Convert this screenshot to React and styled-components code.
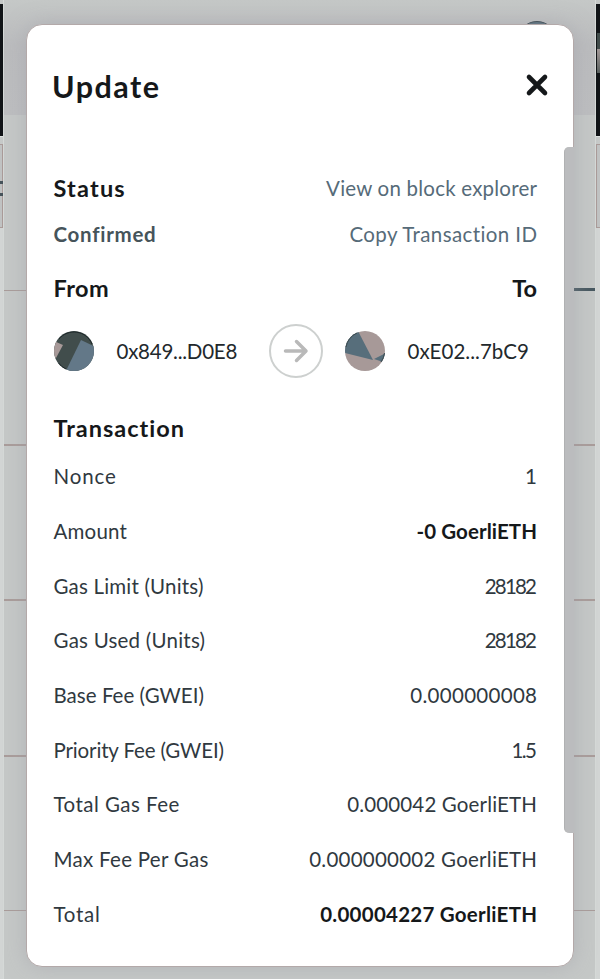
import React from 'react';
import styled, { createGlobalStyle } from 'styled-components';

const GlobalStyle = createGlobalStyle`
  * { box-sizing: border-box; }
  html, body { margin: 0; padding: 0; }
  body {
    font-family: Lato, "Liberation Sans", sans-serif;
    font-variant-ligatures: none;
    color: #15181a;
    overflow: hidden;
  }
`;

const Screen = styled.div`
  position: relative;
  width: 600px;
  height: 979px;
  overflow: hidden;
  background: #c5c8c7;
`;

const Backdrop = styled.div`
  display: grid;
  grid-template-columns: 3px 1fr 4px;
  height: 100%;
`;

const SideStrip = styled.div`
  display: flex;
  flex-direction: column;
  padding-top: 4px;
  background: linear-gradient(#c5c8c7 130px, #d2d5d4 230px);
  overflow: hidden;
`;

const DarkBlock = styled.div`
  height: 133px;
  flex: none;
  background: #111417;
  border-bottom: 1px solid #dfe3e1;
`;

const BoxEdge = styled.div`
  height: 84px;
  flex: none;
  margin-top: 7px;
  border: 1px solid #aa9b99;
  border-width: 1px ${(p) => (p.$right ? 0 : 1)}px 1px ${(p) => (p.$right ? 1 : 0)}px;
  background: #c0c2c2;
  display: flex;
  flex-direction: column;
  padding-top: 36px;
  gap: 9px;
`;

const Tick = styled.span`
  height: 3px;
  width: 3px;
  background: #46535a;
`;

const DarkDetail = styled.div`
  height: 40px;
  margin: 29px 0 0 1px;
  background: linear-gradient(#414c4b 16px, #a39998 16px, #59605f 100%);
`;

const Page = styled.div`
  display: flex;
  flex-direction: column;
  border: solid #d5d9d7;
  border-width: 0 1px;
`;

const PageHeader = styled.div`
  height: 115px;
  flex: none;
  display: flex;
  justify-content: flex-end;
  padding: 21px 38px 0 0;
  background: linear-gradient(#c5c8c7, #bbbcbe 45px, #bdbec0);
`;

const HeaderAvatar = styled.div`
  width: 40px;
  height: 40px;
  border-radius: 50%;
  background: #536b78;
  border: 1px solid #34444b;
`;

const ListRow = styled.div`
  height: ${(p) => p.$height}px;
  flex: none;
  display: flex;
  align-items: flex-end;
  justify-content: space-between;
`;

const Rule = styled.span`
  width: ${(p) => (p.$wide ? 50 : 35)}px;
  height: ${(p) => (p.$strong ? 3 : p.$wide ? 2 : 1)}px;
  background: ${(p) => (p.$strong ? '#475860' : '#a99c9a')};
`;

const Card = styled.section`
  position: absolute;
  left: 26px;
  top: 24px;
  width: 548px;
  height: 943px;
  display: flex;
  flex-direction: column;
  padding: 0 36px 0 26.5px;
  background: #fff;
  border: 1px solid #b3a9a9;
  border-radius: 16px;
  box-shadow: 0 0 20px rgba(158, 158, 166, 0.5);
`;

const Scrollbar = styled.div`
  position: absolute;
  right: -1px;
  top: 122px;
  width: 10px;
  height: 686px;
  border-radius: 5px 0 0 5px;
  background: #bbbcbe;
  border-left: 1px solid #b0b1b2;
`;

const TitleBar = styled.header`
  height: 135px;
  flex: none;
  display: flex;
  justify-content: space-between;
  padding-top: 43px;
  margin-right: -12px;
`;

const Text = styled.span`
  font-size: 20.5px;
  font-weight: ${(p) => (p.$bold ? 700 : 400)};
  line-height: 28px;
  letter-spacing: ${(p) => p.$track || 0}px;
  margin-right: ${(p) => -(p.$track || 0)}px;
  color: ${(p) => p.$color || '#30393f'};
  white-space: nowrap;
`;

const Title = styled.h1`
  margin: 0 0 0 -1.5px;
  font-size: 30.5px;
  line-height: 36px;
  font-weight: 700;
  letter-spacing: 1.5px;
`;

const Heading = styled.h2`
  margin: 0;
  font-size: 23.5px;
  line-height: 30px;
  font-weight: 700;
  letter-spacing: ${(p) => p.$track || 0}px;
`;

const CloseButton = styled.button`
  width: 24px;
  height: 24px;
  margin-top: 5px;
  padding: 0;
  border: 0;
  background: none;
  svg { display: block; }
`;

const Split = styled.div`
  height: ${(p) => p.$height}px;
  flex: none;
  display: flex;
  align-items: center;
  justify-content: space-between;
`;

const Parties = styled.div`
  height: 54px;
  flex: none;
  display: grid;
  grid-template-columns: 40px 175px 54px 22px 40px 1fr;
  align-items: center;
`;

const Address = styled.div`
  padding: 0 0 0 ${(p) => p.$indent}px;
  display: flex;
`;

const ArrowCircle = styled.div`
  width: 54px;
  height: 54px;
  display: grid;
  place-items: center;
  border: 2px solid #cdd0cf;
  border-radius: 50%;
`;

const Spacer = styled.span``;

const Section = styled.div`
  height: 46px;
  flex: none;
  margin-top: 26px;
  padding-top: 9px;
`;

const Rows = styled.dl`
  margin: -1px 0 0;
  display: grid;
  grid-auto-rows: 54.7px;
`;

const Row = styled.div`
  display: flex;
  align-items: center;
  justify-content: space-between;
`;

const rows = [
  ['Nonce', 0.85, '1', 0],
  ['Amount', 0.19, '-0 GoerliETH', 0.08, true],
  ['Gas Limit (Units)', 0.19, '28182', -1.8],
  ['Gas Used (Units)', 0.23, '28182', -1.8],
  ['Base Fee (GWEI)', 0.03, '0.000000008', 0.3],
  ['Priority Fee (GWEI)', -0.14, '1.5', -1.6],
  ['Total Gas Fee', 0.47, '0.000042 GoerliETH', 0.15],
  ['Max Fee Per Gas', 0.29, '0.000000002 GoerliETH', 0.24],
  ['Total', 0.73, '0.00004227 GoerliETH', 0.25, true],
];

const FromAvatar = () => (
  <svg width="40" height="40" viewBox="0 0 40 40">
    <clipPath id="fromClip"><circle cx="20" cy="20" r="20" /></clipPath>
    <g clipPath="url(#fromClip)">
      <rect width="40" height="40" fill="#414d4c" />
      <path d="M0 10 9 14 2 27 0 26Z" fill="#a79998" />
      <path d="M27 9 48 19 34 48 8 48Z" fill="#637888" />
    </g>
    <path d="M4.500 32A19.500 19.500 0 0 0 12 38M5 8A19.500 19.500 0 0 1 38 13" fill="none" stroke="#1d2729" />
  </svg>
);

const ToAvatar = () => (
  <svg width="40" height="40" viewBox="0 0 40 40">
    <clipPath id="toClip"><circle cx="20" cy="20" r="20" /></clipPath>
    <g clipPath="url(#toClip)">
      <rect width="40" height="40" fill="#a79998" />
      <path d="M13 0 28 29 0 22V0Z" fill="#576e7b" />
      <path d="M29 28 41 22V32L35 30Z" fill="#576e7b" />
    </g>
    <path d="M1 16A19.500 19.500 0 0 1 12 2M39.500 22A19.500 19.500 0 0 1 36 31" fill="none" stroke="#3b4b50" />
  </svg>
);

export default function App() {
  return (
    <Screen>
      <GlobalStyle />
      <Backdrop>
        <SideStrip>
          <DarkBlock />
          <BoxEdge><Tick /><Tick /></BoxEdge>
        </SideStrip>
        <Page>
          <PageHeader><HeaderAvatar /></PageHeader>
          <ListRow $height={176}><Rule /><Rule $strong /></ListRow>
          <ListRow $height={155}><Rule $wide /><Rule $wide /></ListRow>
          <ListRow $height={155}><Rule $wide /><Rule $wide /></ListRow>
          <ListRow $height={156}><Rule $wide /><Rule $wide /></ListRow>
          <ListRow $height={154}><Rule /><Rule /></ListRow>
        </Page>
        <SideStrip>
          <DarkBlock><DarkDetail /></DarkBlock>
          <BoxEdge $right />
        </SideStrip>
      </Backdrop>
      <Card>
        <TitleBar>
          <Title>Update</Title>
          <CloseButton aria-label="Close">
            <svg width="24" height="24" viewBox="0 0 24 24">
              <path d="M4 4 20 20M20 4 4 20" stroke="#15181a" strokeWidth="4.600" strokeLinecap="round" />
            </svg>
          </CloseButton>
        </TitleBar>
        <Split $height={55}>
          <Heading $track={1.2}>Status</Heading>
          <Text $color="#566b79" $track={0.22}>View on block explorer</Text>
        </Split>
        <Split $height={37}>
          <Text $bold $color="#46545a" $track={0.72}>Confirmed</Text>
          <Text $color="#566b79" $track={0.39}>Copy Transaction ID</Text>
        </Split>
        <Split $height={72}>
          <Heading $track={0.41}>From</Heading>
          <Heading>To</Heading>
        </Split>
        <Parties>
          <FromAvatar />
          <Address $indent={23}><Text $color="#22282c" $track={-0.24}>0x849...D0E8</Text></Address>
          <ArrowCircle>
            <svg width="26" height="26" viewBox="0 0 26 26">
              <path d="M2.500 13H22M13.500 3.500 23 13 13.500 22.500" fill="none" stroke="#b9b9b9" strokeWidth="3.500" strokeLinecap="round" strokeLinejoin="round" />
            </svg>
          </ArrowCircle>
          <Spacer />
          <ToAvatar />
          <Address $indent={23}><Text $color="#22282c" $track={0.03}>0xE02...7bC9</Text></Address>
        </Parties>
        <Section><Heading $track={1}>Transaction</Heading></Section>
        <Rows>
          {rows.map(([label, labelTrack, value, valueTrack, bold]) => (
            <Row key={label}>
              <Text as="dt" $track={labelTrack}>{label}</Text>
              <Text as="dd" $bold={bold} $color={bold ? '#15181a' : undefined} $track={valueTrack}>{value}</Text>
            </Row>
          ))}
        </Rows>
        <Scrollbar />
      </Card>
    </Screen>
  );
}
